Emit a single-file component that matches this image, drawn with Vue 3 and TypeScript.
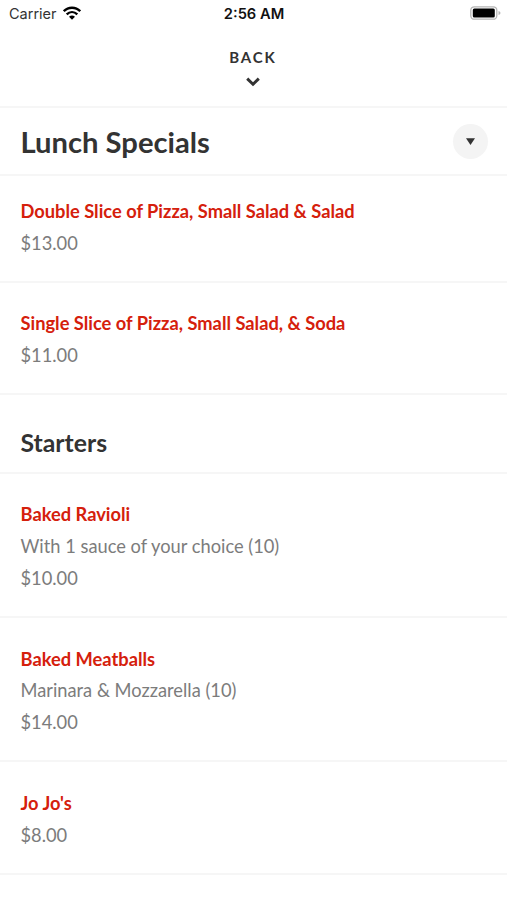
<script setup lang="ts">
interface MenuItem {
  name: string
  description?: string
  price: string
}

const lunch: MenuItem[] = [
  { name: 'Double Slice of Pizza, Small Salad & Salad', price: '$13.00' },
  { name: 'Single Slice of Pizza, Small Salad, & Soda', price: '$11.00' },
]

const starters: MenuItem[] = [
  { name: 'Baked Ravioli', description: 'With 1 sauce of your choice (10)', price: '$10.00' },
  { name: 'Baked Meatballs', description: 'Marinara & Mozzarella (10)', price: '$14.00' },
  { name: "Jo Jo's", price: '$8.00' },
]
</script>

<template>
  <main class="screen">
    <div class="status">
      <div class="carrier">
        <span>Carrier</span>
        <svg class="wifi" viewBox="0 0 18 14" aria-hidden="true">
          <path d="M.8 5.200C5.300.5 12.700.5 17.200 5.200M3.700 8.400C6.800 5.400 11.200 5.400 14.300 8.400" fill="none" stroke="#000" stroke-width="2.400" />
          <path d="M9 13.800 6 10.800Q9 8.400 12 10.800Z" />
        </svg>
      </div>
      <span class="time">2:56 AM</span>
      <svg class="battery" viewBox="0 0 31 14" aria-hidden="true">
        <rect x=".8" y=".8" width="26" height="12.400" rx="3.500" fill="none" stroke="#b5b5b5" stroke-width="1.300" />
        <rect x="2.800" y="2.500" width="22" height="9" rx="1.500" />
        <path d="M28.500 5v4q2-.6 2-2t-2-2" fill="#b5b5b5" />
      </svg>
    </div>
    <header class="back">
      <span>BACK</span>
      <svg viewBox="0 0 14 10" aria-hidden="true"><path d="m1.200 1.600 5.800 5.700 5.800-5.700" /></svg>
    </header>
    <div class="title">
      <h1>Lunch Specials</h1>
      <button aria-label="Choose section"><svg viewBox="0 0 8 6"><path d="M0 0h8L4 6Z" /></svg></button>
    </div>
    <section class="lunch">
      <article v-for="item in lunch" :key="item.name" class="item">
        <h3>{{ item.name }}</h3>
        <p>{{ item.price }}</p>
      </article>
    </section>
    <h2>Starters</h2>
    <section>
      <article v-for="item in starters" :key="item.name" class="item">
        <h3>{{ item.name }}</h3>
        <p v-if="item.description">{{ item.description }}</p>
        <p>{{ item.price }}</p>
      </article>
    </section>
  </main>
</template>

<style>
body { background: #fff; overflow: hidden; }
</style>

<style scoped>
* { box-sizing: border-box; }
.screen { width: 507px; height: 900px; overflow: hidden; background: #fff; font-family: Lato, sans-serif; color: #333; }
.status { height: 28px; display: grid; grid-template-columns: 1fr auto 1fr; align-items: center; padding: 0 6px 0 9px; font: 14.500px/28px Inter, sans-serif; color: #111; }
.carrier { display: flex; align-items: center; gap: 6px; }
.carrier span { color: #333; }
.wifi { width: 18px; height: 14px; position: relative; top: -1px; }
.time { font-weight: 600; font-size: 14.700px; margin-right: 2px; }
.battery { width: 31px; height: 14px; justify-self: end; position: relative; top: -1px; }
.back { height: 80px; border-bottom: 2px solid #f6f6f6; display: flex; flex-direction: column; align-items: center; padding: 19px 1px 0 0; font-size: 15px; line-height: 20px; font-weight: 700; letter-spacing: 1.900px; }
.back svg { width: 14px; height: 10px; margin-top: 9.500px; fill: none; stroke: #333; stroke-width: 2.900; }
.title { height: 68px; border-bottom: 2px solid #f6f6f6; padding: 0 19px 0 20.500px; display: flex; align-items: center; justify-content: space-between; }
h1 { margin: 1px 0 0; font-size: 29.200px; line-height: 34px; font-weight: 700; }
button { width: 35px; height: 35px; padding: 0; border: 0; border-radius: 50%; background: #f4f4f4; display: flex; align-items: center; justify-content: center; }
button svg { width: 9px; height: 7px; fill: #333; }
.item { padding: 25.500px 20.500px 21.300px; border-bottom: 2px solid #f6f6f6; }
.lunch .item:first-child { padding-top: 20.100px; }
h3 { margin: 0; font-size: 18.300px; line-height: 31.800px; font-weight: 700; color: #d5200c; }
p { margin: 0; font-size: 18.300px; line-height: 31.800px; color: #7c7c7c; }
h2 { margin: 0; height: 78.500px; padding: 32.800px 20.500px 0; border-bottom: 2px solid #f6f6f6; font-size: 24.800px; line-height: 30px; font-weight: 700; }
</style>
